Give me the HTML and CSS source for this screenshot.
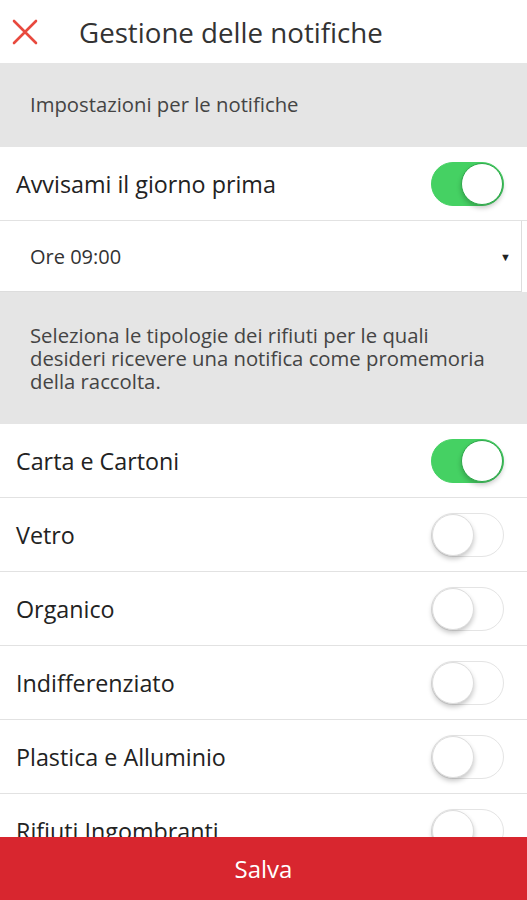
FILE: index.html
```html
<!DOCTYPE html>
<html lang="it">
<head>
    <meta charset="UTF-8">
    <meta name="viewport" content="width=device-width, initial-scale=1.0">
    <title>Gestione delle notifiche</title>
    <link rel="stylesheet" href="styles.css">
</head>
<body>
    <header class="topbar">
        <button class="close-btn" aria-label="Chiudi">
            <svg width="26" height="26" viewBox="0 0 26 26">
                <path d="M2 2 L24 24 M24 2 L2 24" stroke="#e8493e" stroke-width="2.6" stroke-linecap="round" fill="none"/>
            </svg>
        </button>
        <h1>Gestione delle notifiche</h1>
    </header>

    <main class="content">
        <div class="section-note short">Impostazioni per le notifiche</div>

        <div class="row">
            <span>Avvisami il giorno prima</span>
            <span class="toggle on"></span>
        </div>

        <div class="select-row">
            <span>Ore 09:00</span>
            <span class="caret">&#9660;</span>
        </div>

        <div class="section-note">
            Seleziona le tipologie dei rifiuti per le quali desideri ricevere una notifica come promemoria della raccolta.
        </div>

        <div class="row">
            <span>Carta e Cartoni</span>
            <span class="toggle on"></span>
        </div>
        <div class="row">
            <span>Vetro</span>
            <span class="toggle"></span>
        </div>
        <div class="row">
            <span>Organico</span>
            <span class="toggle"></span>
        </div>
        <div class="row">
            <span>Indifferenziato</span>
            <span class="toggle"></span>
        </div>
        <div class="row">
            <span>Plastica e Alluminio</span>
            <span class="toggle"></span>
        </div>
        <div class="row">
            <span>Rifiuti Ingombranti</span>
            <span class="toggle"></span>
        </div>
    </main>

    <button class="save-btn">Salva</button>
</body>
</html>
```

FILE: styles.css
```css
body {
    margin: 0;
    height: 900px;
    overflow: hidden;
    font-family: "Open Sans", Arial, sans-serif;
    color: #222;
    background-color: #fff;
}
.topbar {
    display: flex;
    align-items: center;
    height: 63px;
    background-color: #fff;
}
.close-btn {
    display: flex;
    align-items: center;
    justify-content: center;
    width: 50px;
    height: 63px;
    padding: 0;
    border: none;
    background: none;
}
.topbar h1 {
    margin: 0 0 0 29px;
    font-size: 27.7px;
    font-weight: 400;
    color: #333;
}
.section-note {
    padding: 32px 30px 31px;
    background-color: #e5e5e5;
    font-size: 20.3px;
    line-height: 23px;
    color: #444;
}
.section-note.short {
    padding: 30px 30px 31px;
}
.row {
    display: flex;
    align-items: center;
    justify-content: space-between;
    height: 73px;
    padding: 0 23px 0 16px;
    border-bottom: 1px solid #e2e2e2;
    font-size: 23.3px;
}
.select-row {
    display: flex;
    align-items: center;
    justify-content: space-between;
    height: 70px;
    padding: 0 10px 0 30px;
    border-right: 1px solid #ddd;
    border-bottom: 1px solid #ddd;
    margin-right: 5px;
    font-size: 20px;
    color: #333;
}
.caret {
    font-size: 11px;
    color: #222;
}
.toggle {
    position: relative;
    width: 71px;
    height: 42px;
    border: 1.5px solid #e4e4e4;
    border-radius: 23px;
    background-color: #fff;
}
.toggle::after {
    content: "";
    position: absolute;
    top: 0;
    left: 0;
    width: 40px;
    height: 40px;
    border: 1px solid #ddd;
    border-radius: 50%;
    background-color: #fff;
    box-shadow: 0 3px 5px rgba(0, 0, 0, 0.22);
}
.toggle.on {
    border-color: #45d163;
    background-color: #45d163;
}
.toggle.on::after {
    left: auto;
    right: 0;
    border-color: #2ea84a;
}
.save-btn {
    position: fixed;
    left: 0;
    bottom: 0;
    width: 100%;
    height: 63px;
    border: none;
    background-color: #d8262f;
    color: #fff;
    font-family: "Open Sans", Arial, sans-serif;
    font-size: 24px;
}
```
